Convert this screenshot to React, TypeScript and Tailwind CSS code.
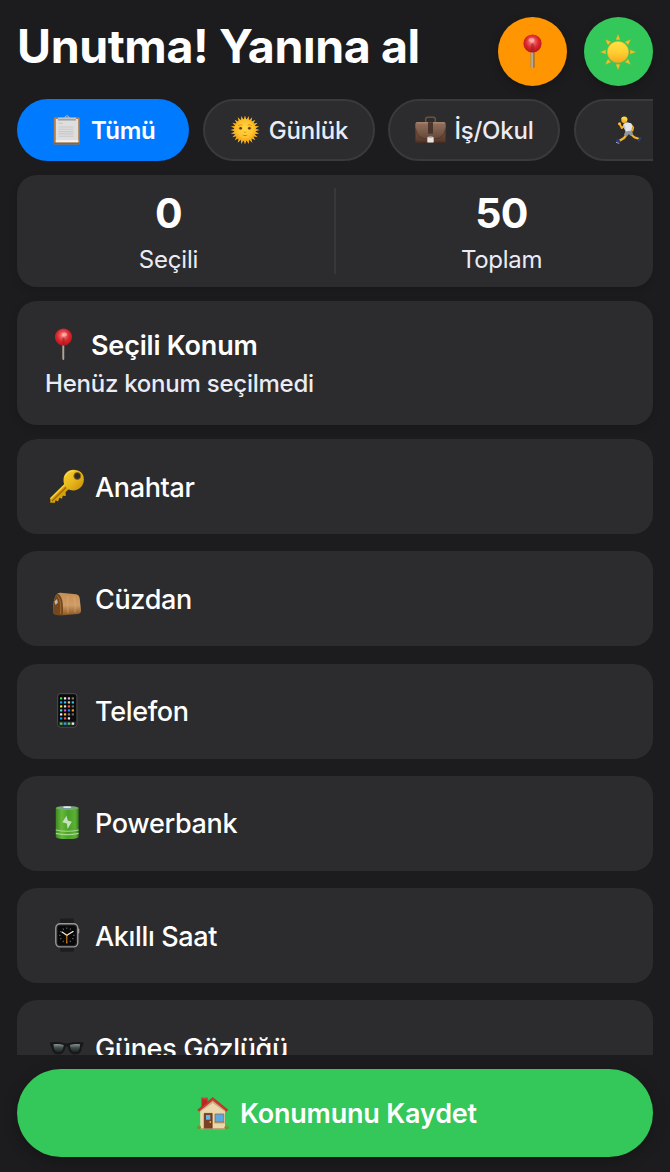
import type { ReactNode } from "react";

function Defs() {
  return (
    <svg className="absolute h-0 w-0" aria-hidden="true">
      <defs>
        <radialGradient id="pinBall" cx="0.48" cy="0.4" r="0.6">
          <stop offset="0" stopColor="#ff9a9a" />
          <stop offset="0.28" stopColor="#ee5a5c" />
          <stop offset="0.6" stopColor="#d9262c" />
          <stop offset="1" stopColor="#b9141b" />
        </radialGradient>
        <linearGradient id="needle" x1="0" x2="1" y1="0" y2="0">
          <stop offset="0" stopColor="#8a7d74" />
          <stop offset="0.4" stopColor="#c5bcb4" />
          <stop offset="1" stopColor="#5d544e" />
        </linearGradient>
        <linearGradient id="sunBall" x1="0" x2="0" y1="0" y2="1">
          <stop offset="0" stopColor="#ffe23f" />
          <stop offset="0.5" stopColor="#ffd033" />
          <stop offset="1" stopColor="#fba71d" />
        </linearGradient>
        <radialGradient id="faceBall" cx="0.5" cy="0.45" r="0.6">
          <stop offset="0" stopColor="#ffd84a" />
          <stop offset="0.6" stopColor="#ffc42c" />
          <stop offset="1" stopColor="#f29c15" />
        </radialGradient>
        <linearGradient id="leather" x1="0" x2="0" y1="0" y2="1">
          <stop offset="0" stopColor="#8d6d5a" />
          <stop offset="0.45" stopColor="#705040" />
          <stop offset="1" stopColor="#50362a" />
        </linearGradient>
        <linearGradient id="flap" x1="0" x2="0" y1="0" y2="1">
          <stop offset="0" stopColor="#94735f" />
          <stop offset="1" stopColor="#654838" />
        </linearGradient>
        <linearGradient id="gold" x1="0" x2="1" y1="0" y2="1">
          <stop offset="0" stopColor="#f7d22d" />
          <stop offset="0.5" stopColor="#e9b81c" />
          <stop offset="1" stopColor="#c58a08" />
        </linearGradient>
        <linearGradient id="tan" x1="0" x2="0" y1="0" y2="1">
          <stop offset="0" stopColor="#c58f55" />
          <stop offset="0.55" stopColor="#cf9d65" />
          <stop offset="1" stopColor="#8a5626" />
        </linearGradient>
        <linearGradient id="cell" x1="0" x2="1" y1="0" y2="0">
          <stop offset="0" stopColor="#3c8a20" />
          <stop offset="0.25" stopColor="#66b83a" />
          <stop offset="0.55" stopColor="#4aa128" />
          <stop offset="0.85" stopColor="#5bb135" />
          <stop offset="1" stopColor="#37811d" />
        </linearGradient>
        <linearGradient id="lens" x1="0" x2="0" y1="0" y2="1">
          <stop offset="0" stopColor="#8e9a97" />
          <stop offset="0.4" stopColor="#47514f" />
          <stop offset="1" stopColor="#1a1d1d" />
        </linearGradient>
      </defs>
    </svg>
  );
}

function Clipboard() {
  return (
    <svg className="h-[30px] w-[28px] shrink-0" viewBox="0 0 28 30">
      <rect x="0.8" y="2.2" width="26" height="27.2" rx="1.2" fill="#ad7f4c" />
      <path d="M1 27.6h25.6v1.6H1z" fill="#8f6435" />
      <path d="M2.8 4h22.4v23.2H2.8z" fill="#dedede" />
      <path d="M2.8 25.2h22.4v2H2.8z" fill="#f2f2f2" />
      <path d="M5.500 8.400h4M5.500 12h15M5.500 14.300h15M5.500 16.600h15M5.500 18.900h15M5.500 21.200h15" stroke="#c8c8ca" strokeWidth="1.100" />
      <path d="M5 2.6h18v2.2H5z" fill="#c3c8cd" />
      <path d="M5 4.4h18v1H5z" fill="#7f868d" />
      <path d="M10.6 3.2c.4-1.6 1.6-1 1.8-2.2a1.8 1.6 0 0 1 3.2 0c.2 1.2 1.4.6 1.8 2.2z" fill="#a8b4c2" />
      <circle cx="14" cy="1.6" r="0.8" fill="#3f83c8" />
    </svg>
  );
}

const faceRays = Array.from({ length: 24 }, (_, i) => i * 15);

function SunFace() {
  return (
    <svg className="h-[30px] w-[30px] shrink-0" viewBox="0 0 30 30">
      {faceRays.map((a) => (
        <path key={a} d="M13.4 5.600 15 .4l1.600 5.200z" fill="#f9b825" transform={`rotate(${a} 15 15)`} />
      ))}
      <circle cx="15" cy="15" r="11" fill="url(#faceBall)" />
      <ellipse cx="10.4" cy="13.3" rx="2.1" ry="1.8" fill="#f3a51e" />
      <ellipse cx="19.6" cy="13.3" rx="2.1" ry="1.8" fill="#f3a51e" />
      <circle cx="10.6" cy="13.2" r="1.2" fill="#5b3410" />
      <circle cx="19.4" cy="13.2" r="1.2" fill="#5b3410" />
      <path d="M8.2 10.6q2-1.5 4.2-.4M17.6 10.2q2.2-1.1 4.2.4M13.7 16.9q1.3 1 2.6 0" fill="none" stroke="#d98512" strokeWidth="0.8" />
      <path d="M12 19.800q3 2.200 6 0-3 .5-6 0z" fill="#d2622b" />
    </svg>
  );
}

function Briefcase() {
  return (
    <svg className="h-[28px] w-[31px] shrink-0" viewBox="0 0 31 28">
      <path d="M10.7 6V3.2q0-2 2-2h5.6q2 0 2 2V6" fill="none" stroke="#70503f" strokeWidth="1.500" />
      <rect x="0.5" y="6" width="30" height="21" rx="1.6" fill="url(#leather)" />
      <path d="M.5 8.500v4c1 6.500 4.500 9.500 10 10.200h10c5.500-.7 9-3.700 10-10.200v-4q0-2.500-2-2.500h-26q-2 0-2 2.500z" fill="url(#flap)" />
      <path d="M.6 12.500c1 6.500 4.500 9.500 10 10.200h9.800c5.500-.7 9-3.700 10-10.200" fill="none" stroke="#4d3327" strokeWidth="0.8" />
      <path d="M1.500 6.300h28v1.100h-28z" fill="#a88873" />
      <rect x="13" y="6.200" width="5" height="11.500" fill="#49342b" />
      <rect x="12.300" y="21" width="6.400" height="5.600" rx="0.8" fill="#e6e5e2" />
      <path d="M13.500 22v-1.600h4V22z" fill="#b5b2ad" />
      <path d="M1 25.800h10.600v1H1zM19.400 25.800H30v1H19.400z" fill="#432b20" />
    </svg>
  );
}

function Runner() {
  return (
    <svg className="h-[29px] w-[27px] shrink-0" viewBox="0 0 27 29">
      <path d="m4.800 8.200 2 3.900 3-3" fill="none" stroke="#f2ae22" strokeWidth="1.900" strokeLinecap="round" strokeLinejoin="round" />
      <circle cx="4.500" cy="7.800" r="1.500" fill="#f9bd35" />
      <path d="m16 8.500 2.300 3-.8 3.200" fill="none" stroke="#f2ae22" strokeWidth="1.700" strokeLinecap="round" strokeLinejoin="round" />
      <path d="m12 18-3 4-4.800 3" fill="none" stroke="#f4b42b" strokeWidth="2.200" strokeLinejoin="round" />
      <path d="m16 18.300 3.300 2.900 5 1.700" fill="none" stroke="#f4b42b" strokeWidth="2.100" strokeLinejoin="round" />
      <path d="m10.700 14.500 6-1 1.300 4.700-2 1.800-2.200-1.800-2.500 2.300-2.300-1.700z" fill="#92959c" />
      <path d="m8.500 7.700 3.500-1.400 4 1 1.300 2.700-.7 4.500-5.900 1-2-4z" fill="#e4e5e8" />
      <path d="m8.500 7.700 1.800 3.600.6 4-2.200-4z" fill="#bfc1c6" />
      <circle cx="9.200" cy="4" r="2.900" fill="#f5b731" />
      <path d="M6.300 3.200Q6.300.7 9.200.500q3.500.1 3.300 3.600l-1.200 1.500-1.200-2.200z" fill="#ffd640" />
      <path d="m1.300 23.700 2.500-.4 1.700 1.900-1.300 1.800-3-.8zM22.800 23.600l1.700-2 2-.7-.4 2.200-2 2.700-1.200-.6z" fill="#283d82" />
      <path d="m1 26 3.200 1 .1.700-3.300-.9z" fill="#c9cbd8" />
    </svg>
  );
}

function HeaderPin() {
  return (
    <svg className="h-[35px] w-[19px]" viewBox="0 0 19 35">
      <path d="M7.600 15h3.800v18.600q-1.900 1.400-3.800 0z" fill="url(#needle)" />
      <circle cx="9.500" cy="9.500" r="9.100" fill="url(#pinBall)" />
      <path d="M7.800 10.500 9.500 9l1.700 1.500V18H7.800z" fill="#93232a" opacity="0.55" />
      <ellipse cx="8.500" cy="6" rx="3" ry="2" fill="#ffd5d2" opacity="0.5" />
    </svg>
  );
}

const sunRays = Array.from({ length: 8 }, (_, i) => i * 45);

function HeaderSun() {
  return (
    <svg className="mr-px h-[36px] w-[36px]" viewBox="0 0 36 36">
      {sunRays.map((a) => (
        <path key={a} d="M15.900 6 18 .5 20.100 6q-2.100-1-4.200 0z" fill="#fbc02b" stroke="#e9a820" strokeWidth="0.4" transform={`rotate(${a} 18 18)`} />
      ))}
      <circle cx="18" cy="18" r="10.600" fill="url(#sunBall)" stroke="#f1b42a" strokeWidth="0.5" />
    </svg>
  );
}

function CardPin() {
  return (
    <svg className="h-[33px] w-[46px] shrink-0" viewBox="0 0 46 33">
      <path d="M17.200 14h2.400v17q-1.200 2-2.400 0z" fill="url(#needle)" />
      <circle cx="18.500" cy="9" r="8.600" fill="url(#pinBall)" />
      <path d="M17.400 10.500 18.500 9.500l1.100 1V17.500h-2.200z" fill="#8f2229" opacity="0.6" />
      <ellipse cx="19.500" cy="6.500" rx="2.600" ry="1.900" fill="#ffd5d2" opacity="0.5" />
    </svg>
  );
}

function ItemIcon({ children }: { children: ReactNode }) {
  return (
    <svg className="h-[48px] w-[50px] shrink-0" viewBox="0 0 50 48">
      {children}
    </svg>
  );
}

function KeyIcon() {
  return (
    <ItemIcon>
      <path d="M20.500 20 5.300 35v4.700h4.600l.6-2.500 2.600 1.300 1.300-3.800 2.600 1 .7-3 3 .2v-4l5-4.500z" fill="#d79f10" />
      <path d="M21 20.500 5.500 35.800" stroke="#f7d23a" strokeWidth="1.500" />
      <path d="M22.500 23 7 38" stroke="#9c6c05" strokeWidth="1.300" />
      <path
        fillRule="evenodd"
        d="M28.500 6.800c6 0 10.400 3.700 10.400 9.500 0 6.600-4.800 11.100-10.400 11.100-6 0-10-4.200-10-10.200 0-5.900 4.200-10.400 10-10.400zm3.800 2.800a3.400 3.400 0 1 0 0 6.800 3.400 3.400 0 0 0 0-6.800z"
        fill="url(#gold)"
      />
      <path d="M20 14q2.500-6 9-6" fill="none" stroke="#fbe36a" strokeWidth="0.800" />
      <circle cx="32.300" cy="13" r="3.500" fill="none" stroke="#94690a" strokeWidth="0.9" />
    </ItemIcon>
  );
}

function PouchIcon() {
  return (
    <ItemIcon>
      <path d="M12.500 18.600q1-1 3-.9l15.500 1.600q3.200.4 3.700 4l1.300 12q.3 3.200-3 3.700l-15 1.300q-6.500.2-9-1.300-1-.7-.9-3.500 0-13.500 4.400-16.900z" fill="url(#tan)" />
      <path d="M12.500 18.600q4.500 1.800 5.300 10.500.5 8-.2 11-5.500.3-8.600-1.100-1-.7-.9-3.500 0-13.500 4.400-16.900z" fill="#75471d" />
      <path d="M12 20.500q3.500 3 3.700 9.500.2 6-.3 9" fill="none" stroke="#a46d35" strokeWidth="1" />
      <path d="M23 21q-1 8 0 17M29 21.500q1.800 7 1 16" fill="none" stroke="#dbad75" strokeWidth="1.500" opacity="0.4" />
      <path d="M9.300 26.500 12 24l.9 3.500-2.300 2.500z" fill="#b7b8bd" />
    </ItemIcon>
  );
}

const appColors = [
  ["#45d95b", "#f3f3f3", "#e3a8df", "#797979"],
  ["#219ff3", "#4ab8ed", "#d8c7a0", "#32c5d8"],
  ["#f1df55", "#dddddd", "#ec5b58", "#666666"],
  ["#46d9dc", "#dc50e2", "#218bf5", "#ff970e"],
  ["#f1f1f1", "#f4bd43", "#777777", "#666666"],
  ["#1598f5", "#f35c50", "#f3f3f3", "#111111"],
];
const dockColors = ["#40d852", "#22a8ee", "#45d95c", "#eeeeee"];

function PhoneIcon() {
  return (
    <ItemIcon>
      <rect x="12.700" y="6.700" width="19.200" height="33.400" rx="2.600" fill="#0a0a0a" stroke="#555557" strokeWidth="0.900" />
      {appColors.map((row, y) =>
        row.map((c, x) => <rect key={`${x}-${y}`} x={15 + x * 3.9} y={10.200 + y * 4} width="2.300" height="2.300" rx="0.6" fill={c} />),
      )}
      <path d="M14 34.600h16.600v4H14z" fill="#34363a" />
      {dockColors.map((c, x) => (
        <rect key={x} x={15 + x * 3.900} y="35.400" width="2.400" height="2.400" rx="0.6" fill={c} />
      ))}
    </ItemIcon>
  );
}

function BatteryIcon() {
  return (
    <ItemIcon>
      <path d="M10.800 9v28.800q0 2.300 11.400 2.300t11.400-2.300V9z" fill="url(#cell)" />
      <ellipse cx="22.200" cy="9" rx="11.400" ry="2" fill="#6faf5e" />
      <ellipse cx="22.200" cy="8.700" rx="8.800" ry="1.300" fill="#8397aa" />
      <ellipse cx="22.200" cy="8.200" rx="4" ry="0.900" fill="#dce7f1" />
      <path d="M10.800 31q11.400 2.500 22.800 0M10.800 34.300q11.400 2.500 22.800 0" fill="none" stroke="#a9d88f" strokeWidth="1.200" />
      <path d="m21.500 16.700-4.200 6.600 4.500 1.300.8 5.500 4.200-7.300-4-1.200z" fill="#c6dfbe" />
    </ItemIcon>
  );
}

const ticks = Array.from({ length: 12 }, (_, i) => i * 30);

function WatchIcon() {
  return (
    <ItemIcon>
      <path d="M15.500 6.500h13l1 7h-15zM14.500 33h15l-1 6.700h-13z" fill="#1d1d1e" />
      <rect x="32.300" y="16.500" width="2" height="5" rx="0.8" fill="#a0a0a1" />
      <rect x="10.800" y="11.700" width="22" height="23.200" rx="4.300" fill="#202021" stroke="#98989a" strokeWidth="1.400" />
      <rect x="12.800" y="13.700" width="18" height="19.200" rx="2.500" fill="#080808" />
      {ticks.map((a) => (
        <path key={a} d="M21.800 15.500v1.500" stroke="#77777a" strokeWidth="0.900" transform={`rotate(${a} 21.800 23.300)`} />
      ))}
      <path d="m21.800 23.300-4.800-3.200M21.800 23.300l6.200-3.700" stroke="#f4f4f4" strokeWidth="1.200" strokeLinecap="round" />
      <path d="M21.800 22.500v9" stroke="#dd8b16" strokeWidth="1" />
      <circle cx="21.800" cy="23.300" r="1" fill="#e9a13a" />
    </ItemIcon>
  );
}

function GlassesIcon() {
  return (
    <ItemIcon>
      <path d="M5 18.500q7-1.500 15 .8h3.500q8-2.300 15-.8l-.4 3q-1 .5-1.200 2.500-.8 6.500-7 6.500-5 0-6.600-6.500-.3-1.700-1.500-1.700t-1.500 1.700q-1.600 6.500-6.600 6.500-6.200 0-7-6.500-.3-2-1.300-2.500z" fill="#171819" />
      <path d="M8.500 20.200q5-.7 10.200.7-.5 7-5 7.600-5 .3-5.200-8.300zM24.900 20.900q5.200-1.400 10.200-.7-.2 8.600-5.200 8.300-4.500-.6-5-7.600z" fill="url(#lens)" />
    </ItemIcon>
  );
}

function HouseIcon() {
  return (
    <svg className="h-[33px] w-[32px] shrink-0" viewBox="0 0 32 33">
      <path d="M4.500 1h6v9h-6z" fill="#b62a25" />
      <path d="M4 .5h7v1.800H4z" fill="#d2423a" />
      <path d="M3.200 12.500 15.700 2.200l12.300 10.300v19.800H3.200z" fill="#ecd6ac" />
      <path d="M3.200 12.500 15.700 3l12.300 9.500v2.300L15.700 6 3.200 14.800z" fill="#bb9d76" opacity="0.7" />
      <path d="M.8 12.800 15.700.500 30.800 12.800l-1.200 1.400L15.700 3.200 2 14.200z" fill="#d8352f" stroke="#98201f" strokeWidth="0.500" />
      <path d="M7.200 16.400h8v15.400h-8z" fill="#7b3f22" stroke="#55270f" strokeWidth="0.600" />
      <path d="M9 18h4.300v4.700H9z" fill="#62b6ec" />
      <circle cx="13.300" cy="25" r="0.900" fill="#e6b34d" />
      <path d="M18 17h8.800v8H18z" fill="#59a9e2" stroke="#8c7458" strokeWidth="0.900" />
      <path d="M17.300 25h10.200v1.300H17.300z" fill="#b28e63" />
      <path d="M3.200 31.300h24.800v1.200H3.200z" fill="#ad8d64" />
      <ellipse cx="2" cy="30.300" rx="2" ry="1.900" fill="#5d9e27" />
      <ellipse cx="29.700" cy="30.300" rx="2.200" ry="1.900" fill="#5d9e27" />
      <circle cx="1.500" cy="28.700" r="0.900" fill="#d27a35" />
      <circle cx="30" cy="28.700" r="0.900" fill="#d27a35" />
    </svg>
  );
}

const items = [
  { name: "Anahtar", icon: <KeyIcon /> },
  { name: "Cüzdan", icon: <PouchIcon /> },
  { name: "Telefon", icon: <PhoneIcon /> },
  { name: "Powerbank", icon: <BatteryIcon /> },
  { name: "Akıllı Saat", icon: <WatchIcon /> },
  { name: "Güneş Gözlüğü", icon: <GlassesIcon /> },
];

export default function App() {
  return (
    <div className="flex h-[1172px] w-[670px] flex-col overflow-hidden bg-[#1c1c1e] px-[17px] font-['Inter',sans-serif] text-white">
      <Defs />
      <header className="flex h-[99px] shrink-0 items-start pt-[17px]">
        <h1 className="flex-1 whitespace-nowrap text-[46.5px] leading-[58px] font-bold tracking-[-0.4px]">Unutma! Yanına al</h1>
        <div className="flex gap-[17px]">
          <button className="flex size-[69px] items-center justify-center rounded-full bg-[#ff9500] shadow-[0_3px_10px_rgba(0,0,0,0.22)]">
            <HeaderPin />
          </button>
          <button className="flex size-[69px] items-center justify-center rounded-full bg-[#34c759] shadow-[0_3px_10px_rgba(0,0,0,0.22)]">
            <HeaderSun />
          </button>
        </div>
      </header>

      <nav className="flex h-[62px] shrink-0 gap-[13.7px] overflow-hidden text-[24px] font-medium tracking-[-0.2px]">
        <button className="flex w-[172px] shrink-0 items-center rounded-full bg-[#007aff] pl-[36px]">
          <Clipboard />
          <span className="ml-[10px] whitespace-nowrap pt-px font-semibold tracking-[-0.3px]">Tümü</span>
        </button>
        <button className="flex w-[172px] shrink-0 items-center rounded-full border-2 border-[#3a3a3c] bg-[#2c2c2e] pl-[25px] text-[#ebebf5]">
          <SunFace />
          <span className="ml-[9px] whitespace-nowrap pt-px">Günlük</span>
        </button>
        <button className="flex w-[172px] shrink-0 items-center rounded-full border-2 border-[#3a3a3c] bg-[#2c2c2e] pl-[25px] text-[#ebebf5]">
          <Briefcase />
          <span className="ml-[8px] whitespace-nowrap pt-px">İş/Okul</span>
        </button>
        <button className="flex w-[172px] shrink-0 items-center rounded-full border-2 border-[#3a3a3c] bg-[#2c2c2e] pl-[39px]">
          <Runner />
        </button>
      </nav>

      <section className="mt-[14px] flex h-[112px] shrink-0 items-center gap-[14px] rounded-[20px] bg-[#2c2c2e] shadow-[0_3px_8px_rgba(0,0,0,0.12)]">
        <div className="flex flex-1 flex-col items-center pt-[2px]">
          <div className="text-[41px] leading-[48px] font-bold tracking-[-0.8px]">0</div>
          <div className="mt-[8px] text-[24px] leading-[30px] tracking-[-0.2px] text-[#ebebf5]">Seçili</div>
        </div>
        <div className="h-[86px] w-[2px] bg-[#38383a]" />
        <div className="flex flex-1 flex-col items-center pt-[2px]">
          <div className="text-[41px] leading-[48px] font-bold tracking-[-0.8px]">50</div>
          <div className="mt-[8px] text-[24px] leading-[30px] tracking-[-0.3px] text-[#ebebf5]">Toplam</div>
        </div>
      </section>

      <section className="mt-[14px] h-[124px] shrink-0 rounded-[20px] bg-[#2c2c2e] pt-[25px] pl-[28px] shadow-[0_3px_8px_rgba(0,0,0,0.12)]">
        <div className="flex h-[37px] items-center">
          <CardPin />
          <h2 className="whitespace-nowrap pt-[3px] text-[27px] leading-[36px] font-semibold tracking-[-0.2px]">Seçili Konum</h2>
        </div>
        <p className="mt-[5px] whitespace-nowrap text-[24px] leading-[32px] font-medium tracking-[-0.240px] text-[#ebebf5]">Henüz konum seçilmedi</p>
      </section>

      <main className="mt-[14px] flex h-[616px] shrink-0 flex-col gap-[17.250px] overflow-hidden rounded-t-[20px]">
        {items.map((item) => (
          <div key={item.name} className="flex h-[95px] shrink-0 items-center rounded-[20px] bg-[#2c2c2e] pl-[28px]">
            {item.icon}
            <span className="whitespace-nowrap pt-[2px] text-[27px] leading-[36px] font-medium tracking-[-0.350px]">{item.name}</span>
          </div>
        ))}
      </main>

      <button className="mt-[14px] flex h-[88px] shrink-0 items-center rounded-full bg-[#34c759] pl-[180px] shadow-[0_4px_14px_rgba(0,0,0,0.25)]">
        <HouseIcon />
        <span className="ml-[11px] whitespace-nowrap pt-[2px] text-[27px] font-semibold tracking-[-0.200px]">Konumunu Kaydet</span>
      </button>
    </div>
  );
}
